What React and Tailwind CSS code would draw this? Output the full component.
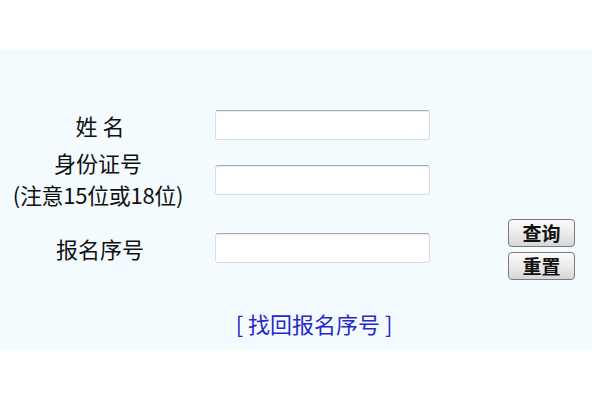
import React from 'react'

const font = { fontFamily: '"Noto Sans CJK SC", "Noto Sans", sans-serif' }

function Field() {
  return (
    <input
      type="text"
      className="w-[215px] h-[30px] bg-white border border-[#d9dde0] border-t-[#a8acb0] rounded-[3px] outline-none shadow-[inset_0_1px_1px_rgba(0,0,0,0.08)]"
    />
  )
}

function Btn({ children }) {
  return (
    <button className="w-[67px] h-[28px] rounded-[4px] border border-[#7a7a7a] bg-gradient-to-b from-[#fbfbfb] via-[#ececec] to-[#d6d6d6] text-[19px] leading-none text-[#111] font-semibold">
      {children}
    </button>
  )
}

export default function App() {
  return (
    <div className="w-[600px] h-[400px] bg-white overflow-hidden" style={font}>
      <div className="mt-[49px] w-[592px] h-[301px] bg-[#f3fbfe] pt-[51px] text-[22px] text-[#111]">
        <div className="flex items-center h-[50px]">
          <div className="w-[200px] text-center leading-[28px]">姓 名</div>
          <div className="ml-[15px]"><Field /></div>
        </div>
        <div className="flex items-center h-[60px]">
          <div className="w-[196px] text-center leading-[32px] -mt-[4px]">
            <div>身份证号</div>
            <div className="tracking-[-0.3px]">(注意15位或18位)</div>
          </div>
          <div className="ml-[19px]"><Field /></div>
        </div>
        <div className="flex items-center h-[76px]">
          <div className="w-[200px] text-center leading-[28px]">报名序号</div>
          <div className="ml-[15px]"><Field /></div>
          <div className="ml-[78px] flex flex-col gap-[5px] pt-[2px]">
            <Btn>查询</Btn>
            <Btn>重置</Btn>
          </div>
        </div>
        <div className="mt-[25px] pl-[36px] text-center text-[#2828c8] leading-[24px]">
          [ 找回报名序号 ]
        </div>
      </div>
    </div>
  )
}
